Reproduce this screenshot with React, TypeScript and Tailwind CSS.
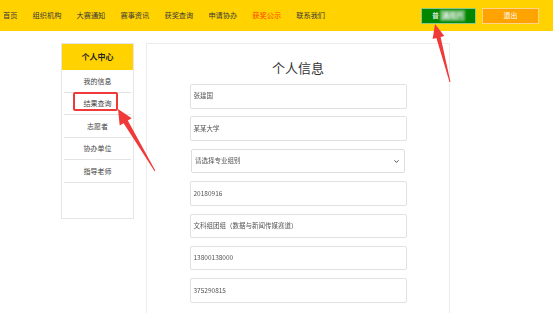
import { ChevronDown } from "lucide-react";

const navItems = ["首页", "组织机构", "大赛通知", "赛事资讯", "获奖查询", "申请协办", "获奖公示", "联系我们"];

const sideItems = ["我的信息", "结果查询", "志愿者", "协办单位", "指导老师"];

// 表单里的值在截图里都打了码，这里用模糊文字代替
const fields = [
    { value: "张建国", select: false },
    { value: "某某大学", select: false },
    { value: "请选择专业组别", select: true },
    { value: "20180916", select: false },
    { value: "文科组团组（数据与新闻传媒赛道）", select: false },
    { value: "13800138000", select: false },
    { value: "375290815", select: false },
];

const font = { fontFamily: '"Noto Sans CJK SC", "Noto Sans", sans-serif' };

export default function App() {
    return (
        <div className="relative w-[553px] h-[313px] overflow-hidden bg-white" style={font}>
            {/* 顶部导航 */}
            <div className="flex items-center h-[31px] bg-[#FFD200] pl-[3px] pr-[14px]">
                <div className="flex items-center gap-[15.2px] text-[7.2px] text-[#3a3a3a]">
                    {navItems.map((item) => (
                        <span key={item} className={item === "获奖公示" ? "text-[#FF3d00]" : ""}>
                            {item}
                        </span>
                    ))}
                </div>
                <div className="ml-auto flex items-center gap-[6px]">
                    <div className="flex items-center justify-center w-[55px] h-[16px] bg-[#008600] border border-[#8cc98c] text-white text-[7px]">
                        <span>普</span>
                        <span className="blur-[1.2px] bg-[#6fb86f] px-[2px] ml-[1px]">通用户</span>
                    </div>
                    <div className="flex items-center justify-center w-[57px] h-[16px] bg-[#FFA300] border border-[#ffd38a] text-white text-[7px]">
                        退出
                    </div>
                </div>
            </div>

            <div className="flex items-start pt-[12px] pl-[61px]">
                {/* 左侧菜单 */}
                <div className="w-[73px] h-[176px] border border-[#e6e6e6] bg-white">
                    <div className="h-[26px] bg-[#FFD200] flex items-center justify-center text-[8px] font-bold text-[#222]">
                        个人中心
                    </div>
                    {sideItems.map((item) => (
                        <div
                            key={item}
                            className="h-[22.6px] mx-[2px] border-b border-[#e3e3e3] flex items-center justify-center text-[7px] text-[#444]"
                        >
                            {item}
                        </div>
                    ))}
                </div>

                {/* 个人信息 */}
                <div className="ml-[12px] w-[304px] h-[300px] border border-[#ececec] pt-[15px]">
                    <div className="h-[18px] leading-[18px] text-center text-[13px] text-[#333] mb-[7px]">
                        个人信息
                    </div>
                    <div className="flex flex-col gap-[7.9px]">
                        {fields.map((f, i) =>
                            f.select ? (
                                <div
                                    key={i}
                                    className="mx-auto w-[214px] h-[24.5px] border border-[#dedede] rounded-[2px] flex items-center pl-[3px] pr-[4px] text-[6.5px] text-[#555]"
                                >
                                    <span className="blur-[0.7px]">{f.value}</span>
                                    <ChevronDown size={7} strokeWidth={3} className="ml-auto text-[#333]" />
                                </div>
                            ) : (
                                <div
                                    key={i}
                                    className="mx-auto w-[217px] h-[24.5px] border border-[#e2e2e2] rounded-[2px] shadow-[0_0_1px_rgba(0,0,0,0.06)] flex items-center pl-[3px] text-[6.5px] text-[#555]"
                                >
                                    <span className="blur-[0.7px]">{f.value}</span>
                                </div>
                            )
                        )}
                    </div>
                </div>
            </div>

            {/* 标注：红框 */}
            <div className="absolute left-[73px] top-[92px] w-[45px] h-[19px] border-2 border-[#F03A3A] rounded-[2px]" />

            {/* 标注：红色箭头 */}
            <svg className="absolute left-0 top-0 pointer-events-none" width="553" height="313">
                <polygon
                    fill="#F03A3A"
                    points="118,109 131.7,118.3 127.8,120.6 155.4,170.7 154.6,171.3 123.6,123.2 119.7,125.5"
                />
                <polygon
                    fill="#F03A3A"
                    points="435,24 444.3,36 440.6,37 450.5,81.9 449.5,82.1 436.4,38.1 432.7,39"
                />
            </svg>
        </div>
    );
}
